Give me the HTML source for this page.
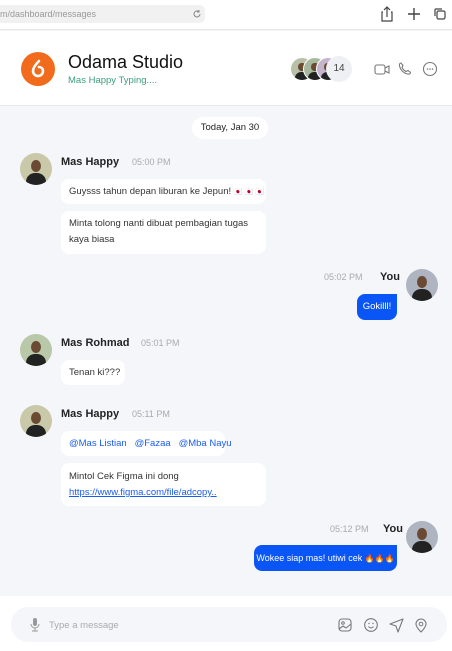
<!DOCTYPE html>
<html><head><meta charset="utf-8"><style>
*{margin:0;padding:0;box-sizing:border-box}
body{width:452px;height:651px;overflow:hidden;background:#f5f6fa;font-family:"Liberation Sans",sans-serif;position:relative;color:#222}
.a{position:absolute}
.bar{left:0;top:0;width:452px;height:30px;background:#fff;border-bottom:1px solid #e6e6e6}
.url{left:-6px;top:5px;width:211px;height:18px;background:#f1f1f1;border-radius:5px;font-size:9px;color:#999;padding:4px 0 0 6px}
.hdr{left:0;top:31px;width:452px;height:75px;background:#fff;border-bottom:1px solid #e5e8f0}
.av{border-radius:50%;overflow:hidden;background:#c9c8a8}
.av::after{content:"";position:absolute;left:18%;top:62%;width:64%;height:60%;border-radius:45% 45% 0 0;background:#222}
.av::before{content:"";position:absolute;left:34%;top:22%;width:32%;height:38%;border-radius:50%;background:#6b4a34}
.bub{background:#fff;border-radius:8px;font-size:9.5px;color:#333;padding:0 8px;line-height:16px;white-space:nowrap}
.name{font-size:11px;font-weight:bold;color:#222}
.time{font-size:9px;color:#aaa}
.blue{background:#0a55f5;color:#fff;border-radius:8px 0 8px 8px;font-size:9.5px;text-align:center;white-space:nowrap}
</style></head><body>
<div class="a bar"></div>
<div class="a url">m/dashboard/messages</div>
<svg class="a" style="left:192px;top:9px" width="10" height="10" viewBox="0 0 10 10"><path d="M8 5a3 3 0 1 1-1-2.3M7 1v2h-2" fill="none" stroke="#888" stroke-width="1"/></svg>
<svg class="a" style="left:380px;top:5px" width="70" height="18" viewBox="0 0 70 18"><path d="M3 7h-1v9h10v-9h-1M7 12V2M4 5l3-3 3 3" fill="none" stroke="#444" stroke-width="1.2"/><path d="M34 3v12M28 9h12" stroke="#444" stroke-width="1.4"/><rect x="57" y="6" width="8" height="8" rx="1.5" fill="none" stroke="#444" stroke-width="1.2"/><path d="M55 11V5a1 1 0 0 1 1-1h6" fill="none" stroke="#444" stroke-width="1.2"/></svg>
<div class="a hdr"></div>
<div class="a" style="left:21px;top:52px;width:34px;height:34px;border-radius:50%;background:#f26a1b"></div>
<svg class="a" style="left:29px;top:59px" width="18" height="20" viewBox="0 0 18 20"><path d="M10 2C6 6 4 9 4 12a5 5 0 0 0 10 0c0-2.5-2-4-4-4" fill="none" stroke="#fff" stroke-width="2.6" stroke-linecap="round"/></svg>
<div class="a" style="left:68px;top:52px;font-size:18px;color:#111">Odama Studio</div>
<div class="a" style="left:68px;top:75px;font-size:9.5px;color:#3a9e78">Mas Happy Typing....</div>
<div class="a av" style="left:290px;top:57px;width:24px;height:24px;border:1.5px solid #fff;background:#b8c0a8"></div>
<div class="a av" style="left:303px;top:57px;width:24px;height:24px;border:1.5px solid #fff;background:#a8b89c"></div>
<div class="a av" style="left:316px;top:57px;width:24px;height:24px;border:1.5px solid #fff;background:#c4b4cc"></div>
<div class="a" style="left:326px;top:56px;width:26px;height:26px;border-radius:50%;background:#eef0f4;font-size:10px;color:#444;text-align:center;line-height:26px">14</div>
<svg class="a" style="left:372px;top:60px" width="70" height="18" viewBox="0 0 70 18"><rect x="3" y="5" width="10" height="9" rx="2" fill="none" stroke="#777" stroke-width="1.1"/><path d="M13 8l4-2v7l-4-2" fill="none" stroke="#777" stroke-width="1.1"/><path d="M29 3c-1 0-2 1-1.5 3 1 4 4 7 8 8 2 .5 3-.5 3-1.5l-2.5-2-2 1c-2-1-3-2-4-4l1-2z" fill="none" stroke="#777" stroke-width="1.1"/><circle cx="58" cy="9" r="6.5" fill="none" stroke="#777" stroke-width="1.1"/><circle cx="55.5" cy="9" r=".8" fill="#777"/><circle cx="58" cy="9" r=".8" fill="#777"/><circle cx="60.5" cy="9" r=".8" fill="#777"/></svg>

<div class="a" style="left:192px;top:117px;width:76px;height:22px;border-radius:11px;background:#fff;font-size:9.5px;color:#222;text-align:center;line-height:22px">Today, Jan 30</div>

<div class="a av" style="left:20px;top:153px;width:32px;height:32px"></div>
<div class="a name" style="left:61px;top:156px">Mas Happy</div>
<div class="a time" style="left:132px;top:157px">05:00 PM</div>
<div class="a bub" style="left:61px;top:179px;width:205px;height:25px;line-height:25px">Guysss tahun depan liburan ke Jepun! <span style="color:#d33;font-size:7px">🇯🇵 🇯🇵 🇯🇵</span></div>
<div class="a bub" style="left:61px;top:211px;width:205px;height:43px;padding-top:5px;white-space:normal">Minta tolong nanti dibuat pembagian tugas kaya biasa</div>

<div class="a time" style="left:324px;top:272px">05:02 PM</div>
<div class="a name" style="left:380px;top:271px">You</div>
<div class="a av" style="left:406px;top:269px;width:32px;height:32px;background:#aeb4c0"></div>
<div class="a blue" style="left:357px;top:294px;width:40px;height:26px;line-height:26px">Gokilll!</div>

<div class="a av" style="left:20px;top:334px;width:32px;height:32px;background:#b8c8a8"></div>
<div class="a name" style="left:61px;top:337px">Mas Rohmad</div>
<div class="a time" style="left:141px;top:338px">05:01 PM</div>
<div class="a bub" style="left:61px;top:360px;width:64px;height:25px;line-height:25px">Tenan ki???</div>

<div class="a av" style="left:20px;top:405px;width:32px;height:32px"></div>
<div class="a name" style="left:61px;top:408px">Mas Happy</div>
<div class="a time" style="left:132px;top:409px">05:11 PM</div>
<div class="a bub" style="left:61px;top:431px;width:164px;height:25px;line-height:25px;color:#1a5cf0">@Mas Listian &nbsp; @Fazaa &nbsp; @Mba Nayu</div>
<div class="a bub" style="left:61px;top:463px;width:205px;height:43px;padding-top:6px">Mintol Cek Figma ini dong<br><span style="color:#1a5cf0;text-decoration:underline">https://www.figma.com/file/adcopy..</span></div>

<div class="a time" style="left:330px;top:524px">05:12 PM</div>
<div class="a name" style="left:383px;top:523px">You</div>
<div class="a av" style="left:406px;top:521px;width:32px;height:32px;background:#aeb4c0"></div>
<div class="a blue" style="left:254px;top:545px;width:143px;height:26px;line-height:26px;font-size:9px">Wokee siap mas! utiwi cek <span style="font-size:8px">🔥🔥🔥</span></div>

<div class="a" style="left:0;top:596px;width:452px;height:55px;background:#fff"></div>
<div class="a" style="left:11px;top:607px;width:436px;height:35px;border-radius:17px;background:#f5f6fa"></div>
<svg class="a" style="left:29px;top:617px" width="12" height="15" viewBox="0 0 12 15"><rect x="4" y="1" width="4" height="8" rx="2" fill="#999"/><path d="M2 7a4 4 0 0 0 8 0M6 11v3M3 14h6" fill="none" stroke="#999" stroke-width="1"/></svg>
<div class="a" style="left:49px;top:620px;font-size:9.5px;color:#aaa">Type a message</div>
<svg class="a" style="left:336px;top:615px" width="96" height="20" viewBox="0 0 96 20"><rect x="3" y="4" width="12" height="12" rx="3" fill="none" stroke="#777" stroke-width="1.1"/><circle cx="7" cy="8" r="1.3" fill="none" stroke="#777"/><path d="M3 14l4-3 3 2 5-4" fill="none" stroke="#777" stroke-width="1.1"/><circle cx="35" cy="10" r="6.3" fill="none" stroke="#777" stroke-width="1.1"/><circle cx="33" cy="8.5" r=".7" fill="#777"/><circle cx="37" cy="8.5" r=".7" fill="#777"/><path d="M32.5 11.5a3 3 0 0 0 5 0" fill="none" stroke="#777" stroke-width="1"/><path d="M67 4l-13 5 6 2 2 6z" fill="none" stroke="#777" stroke-width="1.1" stroke-linejoin="round"/><path d="M85 17c-3-3-5-5.5-5-8a5 5 0 0 1 10 0c0 2.5-2 5-5 8z" fill="none" stroke="#777" stroke-width="1.1"/><circle cx="85" cy="9" r="1.8" fill="none" stroke="#777"/></svg>
</body></html>
